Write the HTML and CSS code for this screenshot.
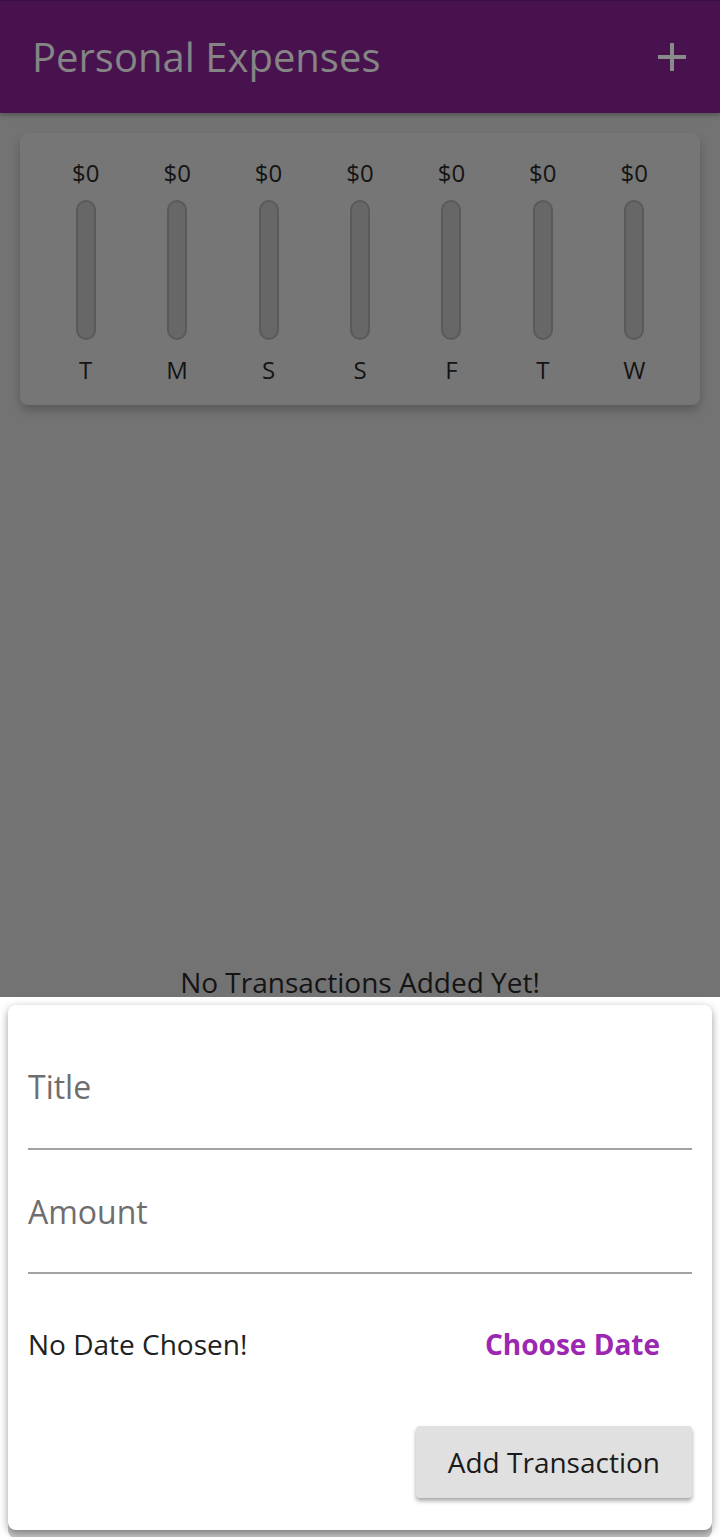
FILE: index.html
```html
<!DOCTYPE html>
<html lang="en">
<head>
<meta charset="utf-8">
<title>Personal Expenses</title>
<link rel="stylesheet" href="styles.css">
</head>
<body>
<div class="screen">
  <header class="appbar">
    <h1 class="title">Personal Expenses</h1>
    <button class="add-btn" aria-label="Add">
      <svg width="28" height="28" viewBox="0 0 28 28"><path d="M14 0V28M0 14H28" stroke="#8a8a8a" stroke-width="4" fill="none"/></svg>
    </button>
  </header>
  <main class="content">
    <section class="chart">
      <div class="bar-col"><div class="amount">$0</div><div class="bar"></div><div class="day">T</div></div>
      <div class="bar-col"><div class="amount">$0</div><div class="bar"></div><div class="day">M</div></div>
      <div class="bar-col"><div class="amount">$0</div><div class="bar"></div><div class="day">S</div></div>
      <div class="bar-col"><div class="amount">$0</div><div class="bar"></div><div class="day">S</div></div>
      <div class="bar-col"><div class="amount">$0</div><div class="bar"></div><div class="day">F</div></div>
      <div class="bar-col"><div class="amount">$0</div><div class="bar"></div><div class="day">T</div></div>
      <div class="bar-col"><div class="amount">$0</div><div class="bar"></div><div class="day">W</div></div>
    </section>
    <p class="empty">No Transactions Added Yet!</p>
  </main>
  <section class="sheet">
    <div class="form-card">
      <div class="field"><span class="label">Title</span></div>
      <div class="field"><span class="label">Amount</span></div>
      <div class="date-row">
        <span class="date-text">No Date Chosen!</span>
        <button class="choose">Choose Date</button>
      </div>
      <div class="actions">
        <button class="submit">Add Transaction</button>
      </div>
    </div>
  </section>
</div>
</body>
</html>
```

FILE: styles.css
```css
html, body {
  margin: 0;
  padding: 0;
}
body {
  font-family: "Open Sans", "Noto Sans", sans-serif;
  background: #737373;
}
.screen {
  height: 1537px;
  display: flex;
  flex-direction: column;
  overflow: hidden;
  background: #737373;
}
.appbar {
  height: 113px;
  box-sizing: border-box;
  border-top: 1px solid #3b0e41;
  background: #48124f;
  display: flex;
  align-items: center;
  padding-left: 32px;
  box-shadow: 0 2px 5px rgba(0, 0, 0, 0.3);
  flex-shrink: 0;
}
.title {
  flex: 1;
  margin: 0;
  font-size: 40px;
  font-weight: 400;
  line-height: 1;
  color: #858585;
}
.add-btn {
  width: 96px;
  height: 96px;
  padding: 0;
  border: 0;
  background: none;
  display: flex;
  align-items: center;
  justify-content: center;
}
.content {
  flex: 1;
  min-height: 0;
  display: flex;
  flex-direction: column;
}
.chart {
  margin: 20px;
  padding: 20px 20px 15px;
  background: #767676;
  border-radius: 8px;
  box-shadow: 0 5px 10px rgba(0, 0, 0, 0.22);
  display: flex;
}
.bar-col {
  flex: 1;
  display: flex;
  flex-direction: column;
  align-items: center;
}
.amount, .day {
  height: 40px;
  line-height: 40px;
  font-size: 24px;
  color: #141414;
}
.bar {
  width: 20px;
  height: 140px;
  margin-top: 7px;
  box-sizing: border-box;
  border: 2px solid #5a5a5a;
  background: #676767;
  border-radius: 10px;
}
.day {
  margin-top: 10px;
}
.empty {
  margin: auto 0 0;
  text-align: center;
  font-size: 28px;
  line-height: 30px;
  color: #141414;
}
.sheet {
  height: 540px;
  flex-shrink: 0;
  box-sizing: border-box;
  padding: 8px;
  background: #fff;
}
.form-card {
  background: #fff;
  border-radius: 8px;
  box-shadow: 0 3px 8px rgba(0, 0, 0, 0.4), 0 8px 0 rgba(0, 0, 0, 0.22);
  padding: 20px;
}
.field {
  height: 125px;
  box-sizing: border-box;
  border-bottom: 2px solid #a3a3a3;
  display: flex;
  align-items: center;
}
.field + .field {
  height: 124px;
}
.label {
  font-size: 32px;
  color: #6e6e6e;
}
.date-row {
  height: 140px;
  display: flex;
  align-items: center;
  justify-content: space-between;
}
.date-text {
  font-size: 28px;
  color: #212121;
}
.choose {
  height: 72px;
  padding: 0 32px;
  border: 0;
  background: none;
  font-family: inherit;
  font-size: 28px;
  font-weight: 700;
  color: #9c27b0;
}
.actions {
  height: 96px;
  display: flex;
  justify-content: flex-end;
  align-items: center;
}
.submit {
  height: 72px;
  padding: 0 32px;
  border: 0;
  border-radius: 4px;
  background: #e0e0e0;
  box-shadow: 0 3px 4px rgba(0, 0, 0, 0.35);
  font-family: inherit;
  font-size: 28px;
  color: #1a1a1a;
}
```
